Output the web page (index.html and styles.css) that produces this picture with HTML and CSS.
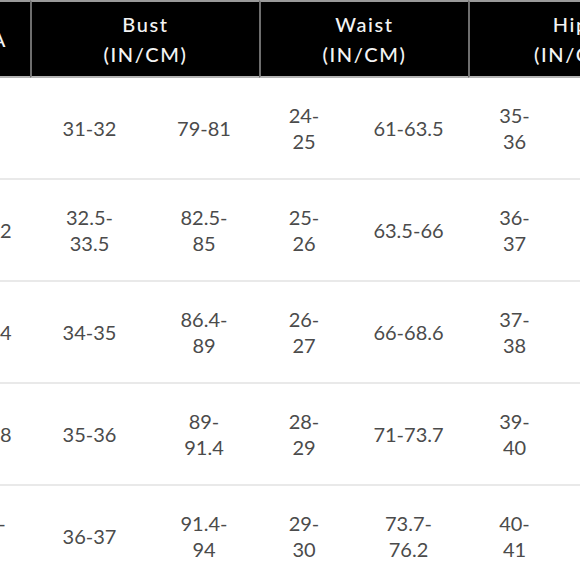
FILE: index.html
```html
<!DOCTYPE html>
<html lang="en">
<head>
<meta charset="utf-8">
<title>Size chart</title>
<link rel="stylesheet" href="styles.css">
</head>
<body>
<div class="viewport">
  <table class="chart">
    <colgroup>
      <col class="w-size">
      <col class="w-bust-in">
      <col class="w-bust-cm">
      <col class="w-waist-in">
      <col class="w-waist-cm">
      <col class="w-hip-in">
      <col class="w-hip-cm">
    </colgroup>
    <thead>
      <tr>
        <th class="size-head"><div class="size-label">US/CA</div></th>
        <th colspan="2">Bust<br>(IN/CM)</th>
        <th colspan="2">Waist<br>(IN/CM)</th>
        <th colspan="2">Hips<br>(IN/CM)</th>
      </tr>
    </thead>
    <tbody>
      <tr>
        <td class="size">0</td>
        <td>31-<wbr>32</td><td>79-<wbr>81</td>
        <td>24-<wbr>25</td><td>61-<wbr>63.5</td>
        <td>35-<wbr>36</td><td>89-<wbr>91.4</td>
      </tr>
      <tr>
        <td class="size">0-2</td>
        <td>32.5-<wbr>33.5</td><td>82.5-<wbr>85</td>
        <td>25-<wbr>26</td><td>63.5-<wbr>66</td>
        <td>36-<wbr>37</td><td>91.4-<wbr>94</td>
      </tr>
      <tr>
        <td class="size">2-4</td>
        <td>34-<wbr>35</td><td>86.4-<wbr>89</td>
        <td>26-<wbr>27</td><td>66-<wbr>68.6</td>
        <td>37-<wbr>38</td><td>94-<wbr>96.5</td>
      </tr>
      <tr>
        <td class="size">6-8</td>
        <td>35-<wbr>36</td><td>89-<wbr>91.4</td>
        <td>28-<wbr>29</td><td>71-<wbr>73.7</td>
        <td>39-<wbr>40</td><td>99-<wbr>101.6</td>
      </tr>
      <tr>
        <td class="size size-wrap">10-<wbr>12</td>
        <td>36-<wbr>37</td><td>91.4-<wbr>94</td>
        <td>29-<wbr>30</td><td>73.7-<wbr>76.2</td>
        <td>40-<wbr>41</td><td>101.6-<wbr>104</td>
      </tr>
    </tbody>
  </table>
</div>
</body>
</html>
```
FILE: styles.css
```css
html, body {
  margin: 0;
  padding: 0;
  background: #ffffff;
}

.viewport {
  width: 580px;
  height: 580px;
  overflow: hidden;
}

.chart {
  margin-left: -39px;
  table-layout: fixed;
  width: 721px;
  border-collapse: separate;
  border-spacing: 0;
  font-family: Lato, "Open Sans", sans-serif;
  font-size: 20px;
}

.w-size { width: 69px; }
.w-bust-in { width: 119px; }
.w-bust-cm { width: 110px; }
.w-waist-in { width: 90px; }
.w-waist-cm { width: 119px; }
.w-hip-in { width: 93px; }
.w-hip-cm { width: 121px; }

.chart th {
  background: #000000;
  color: #f4f4f4;
  font-weight: 500;
  letter-spacing: 1.6px;
  line-height: 30px;
  height: 78px;
  padding: 0;
  text-align: center;
  vertical-align: middle;
  border-top: 2px solid #9a9a9a;
  border-bottom: 2px solid #b4b4b4;
  border-left: 2px solid #6e6e6e;
  box-sizing: border-box;
}

.chart th.size-head {
  border-left: none;
  padding-right: 23px;
}

.size-label {
  display: flex;
  justify-content: flex-end;
  white-space: nowrap;
}

.chart td {
  color: #4b4b4b;
  line-height: 26px;
  height: 102px;
  padding: 0 24px;
  text-align: center;
  vertical-align: middle;
  border-bottom: 2px solid #e9e9e9;
  box-sizing: border-box;
}

.chart td.size {
  text-align: left;
  padding: 0 10px 0 20px;
}

.chart td.size-wrap {
  padding-left: 14px;
}
```
